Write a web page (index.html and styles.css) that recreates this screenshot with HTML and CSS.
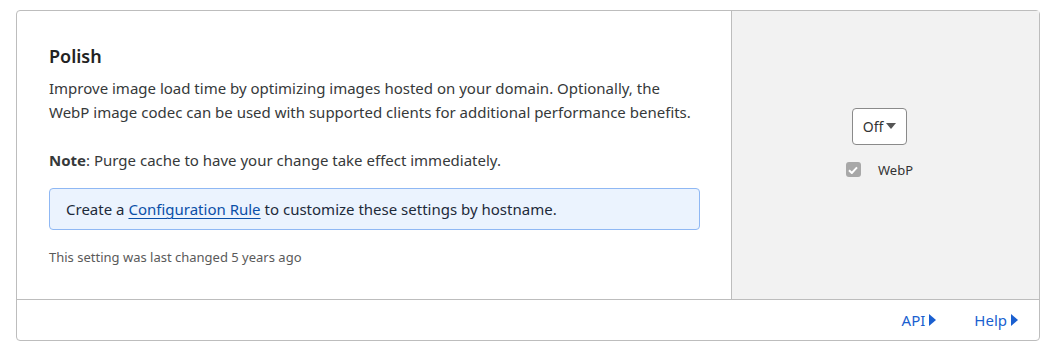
FILE: index.html
```html
<!DOCTYPE html>
<html lang="en">
<head>
  <meta charset="UTF-8" />
  <title>Polish</title>
  <link rel="stylesheet" href="styles.css">
</head>
<body>

  <div class="card">
    <div class="card-main">
      <div class="card-body">
        <h3>Polish</h3>
        <p class="desc">Improve image load time by optimizing images hosted on your domain. Optionally, the WebP image codec can be used with supported clients for additional performance benefits.</p>
        <p class="note"><b>Note</b>: Purge cache to have your change take effect immediately.</p>
        <div class="info">Create a <a href="#">Configuration Rule</a> to customize these settings by hostname.</div>
        <div class="changed">This setting was last changed 5 years ago</div>
      </div>
      <div class="card-control">
        <button class="dropdown">Off <span class="caret"></span></button>
        <label class="check">
          <span class="box">
            <svg width="10" height="8" viewBox="0 0 10 8"><path d="M1 4.2 L3.8 7 L9 1.3" fill="none" stroke="#fff" stroke-width="2"/></svg>
          </span>
          WebP
        </label>
      </div>
    </div>
    <div class="card-footer">
      <a href="#">API <span class="tri"></span></a>
      <a href="#">Help <span class="tri"></span></a>
    </div>
  </div>

</body>
</html>
```

FILE: styles.css
```css
* {
  margin: 0; padding: 0; box-sizing: border-box;
}
body {
  font-family: 'Noto Sans', 'Open Sans', sans-serif;
  background: #fff;
  color: #36393a;
  padding: 10px 7px 0 16px;
}

.card {
  width: 1024px;
  border: 1px solid #bdbdbd;
  border-radius: 4px;
}

.card-main {
  display: flex;
  border-bottom: 1px solid #bdbdbd;
}

.card-body {
  width: 715px;
  padding: 33px 32px 33px 32px;
  border-right: 1px solid #bdbdbd;
}

h3 {
  font-size: 18px;
  font-weight: 600;
  color: #222;
  line-height: 24px;
  margin-bottom: 8px;
}

.desc, .note {
  font-size: 15px;
  line-height: 24px;
}

.desc {
  margin-bottom: 24px;
}

.note {
  margin-bottom: 16px;
}

.note b {
  font-weight: 700;
}

.info {
  width: 651px;
  height: 42px;
  display: flex;
  align-items: center;
  padding: 0 16px;
  background: #ebf3fe;
  border: 1px solid #8fb8f4;
  border-radius: 4px;
  font-size: 15px;
  color: #1d2a3a;
  margin-bottom: 18px;
}

.info a {
  color: #0a4fa8;
  text-decoration: underline;
  text-underline-offset: 3px;
  margin: 0 4px;
}

.changed {
  font-size: 13px;
  line-height: 18px;
  color: #5a5a5a;
}

.card-control {
  flex: 1;
  background: #f2f2f2;
  display: flex;
  flex-direction: column;
  align-items: center;
  justify-content: center;
  gap: 17px;
  padding: 0 12px 25px 0;
}

.dropdown {
  font-family: inherit;
  font-size: 14px;
  color: #333;
  background: #fff;
  border: 1px solid #8a8a8a;
  border-radius: 4px;
  width: 55px;
  height: 37px;
  display: flex;
  align-items: center;
  justify-content: center;
  gap: 3px;
}

.caret {
  width: 0;
  height: 0;
  border-left: 5px solid transparent;
  border-right: 5px solid transparent;
  border-top: 6px solid #555;
}

.check {
  display: flex;
  align-items: center;
  gap: 17px;
  font-size: 13px;
  line-height: 16px;
  color: #333;
}

.box {
  width: 15px;
  height: 15px;
  border-radius: 3px;
  background: #a8a8a8;
  display: flex;
  align-items: center;
  justify-content: center;
}

.card-footer {
  height: 40px;
  display: flex;
  justify-content: flex-end;
  align-items: center;
  gap: 38px;
  padding-right: 21px;
}

.card-footer a {
  font-size: 15px;
  color: #1a5fd0;
  text-decoration: none;
  display: flex;
  align-items: center;
  gap: 4px;
}

.tri {
  width: 0;
  height: 0;
  border-top: 6px solid transparent;
  border-bottom: 6px solid transparent;
  border-left: 7px solid #1a5fd0;
}
```
